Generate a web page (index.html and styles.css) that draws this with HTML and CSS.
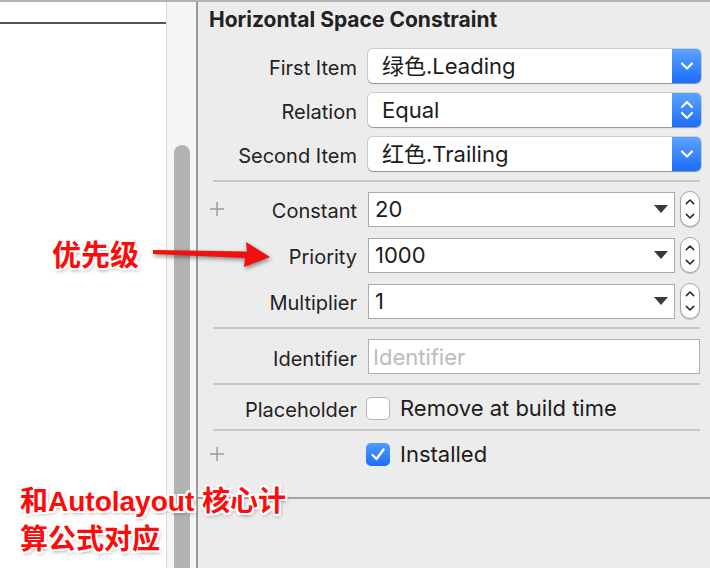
FILE: index.html
```html
<!DOCTYPE html>
<html>
<head>
<meta charset="utf-8">
<link rel="stylesheet" href="styles.css">
</head>
<body>
<div class="window">
  <div class="left-pane"><div class="rule"></div></div>
  <div class="scroll-col"><div class="thumb"></div></div>
  <div class="panel">
    <h2 class="title">Horizontal Space Constraint</h2>

    <div class="row first">
      <div class="lab"><span class="txt">First Item</span></div>
      <div class="popup">
        <span class="val">绿色.Leading</span>
        <span class="btn"><svg width="14" height="10" viewBox="0 0 14 10"><path d="M2 2.5 L7 7.5 L12 2.5" fill="none" stroke="#fff" stroke-width="2.2" stroke-linecap="round" stroke-linejoin="round"/></svg></span>
      </div>
    </div>
    <div class="row popup-row">
      <div class="lab"><span class="txt">Relation</span></div>
      <div class="popup">
        <span class="val">Equal</span>
        <span class="btn"><svg width="14" height="24" viewBox="0 0 14 24"><path d="M2 9 L7 4 L12 9 M2 15 L7 20 L12 15" fill="none" stroke="#fff" stroke-width="2.2" stroke-linecap="round" stroke-linejoin="round"/></svg></span>
      </div>
    </div>
    <div class="row popup-row">
      <div class="lab"><span class="txt">Second Item</span></div>
      <div class="popup">
        <span class="val">红色.Trailing</span>
        <span class="btn"><svg width="14" height="10" viewBox="0 0 14 10"><path d="M2 2.5 L7 7.5 L12 2.5" fill="none" stroke="#fff" stroke-width="2.2" stroke-linecap="round" stroke-linejoin="round"/></svg></span>
      </div>
    </div>

    <div class="sep"></div>

    <div class="row combo-row first-combo">
      <div class="lab"><svg class="plus" width="14" height="14" viewBox="0 0 14 14"><path d="M7 0 V14 M0 7 H14" stroke="#9c9c9c" stroke-width="1.5"/></svg><span class="txt">Constant</span></div>
      <div class="combo"><span class="val">20</span><span class="tri"></span></div>
      <div class="stepper"><svg width="20" height="36" viewBox="0 0 20 36"><path d="M6 12 L10 8 L14 12 M6 24 L10 28 L14 24" fill="none" stroke="#2a2a2a" stroke-width="1.8" stroke-linecap="round" stroke-linejoin="round"/></svg></div>
    </div>
    <div class="row combo-row">
      <div class="lab"><span class="txt">Priority</span></div>
      <div class="combo"><span class="val">1000</span><span class="tri"></span></div>
      <div class="stepper"><svg width="20" height="36" viewBox="0 0 20 36"><path d="M6 12 L10 8 L14 12 M6 24 L10 28 L14 24" fill="none" stroke="#2a2a2a" stroke-width="1.8" stroke-linecap="round" stroke-linejoin="round"/></svg></div>
    </div>
    <div class="row combo-row">
      <div class="lab"><span class="txt">Multiplier</span></div>
      <div class="combo"><span class="val">1</span><span class="tri"></span></div>
      <div class="stepper"><svg width="20" height="36" viewBox="0 0 20 36"><path d="M6 12 L10 8 L14 12 M6 24 L10 28 L14 24" fill="none" stroke="#2a2a2a" stroke-width="1.8" stroke-linecap="round" stroke-linejoin="round"/></svg></div>
    </div>

    <div class="sep sep-b"></div>

    <div class="row field-row">
      <div class="lab"><span class="txt">Identifier</span></div>
      <div class="field"><span class="ph">Identifier</span></div>
    </div>

    <div class="sep"></div>

    <div class="row check-row">
      <div class="lab"><span class="txt">Placeholder</span></div>
      <span class="box"></span>
      <span class="ctext">Remove at build time</span>
    </div>

    <div class="sep"></div>

    <div class="row check-row">
      <div class="lab"><svg class="plus" width="14" height="14" viewBox="0 0 14 14"><path d="M7 0 V14 M0 7 H14" stroke="#9c9c9c" stroke-width="1.5"/></svg></div>
      <span class="box checked"><svg width="24" height="23" viewBox="0 0 24 23"><path d="M6.5 12 L10.5 16 L17.5 6.5" fill="none" stroke="#fff" stroke-width="2.4" stroke-linecap="round" stroke-linejoin="round"/></svg></span>
      <span class="ctext">Installed</span>
    </div>

    <div class="bottom-rule"></div>
  </div>

  <div class="note note-priority">优先级</div>
  <svg class="arrow" width="130" height="40" viewBox="0 0 130 40">
    <polygon points="3,12 97,13.5 96,4 120,19 94,29 95,20 3,16" fill="#f2100e"/>
  </svg>
  <div class="note note-formula">和Autolayout 核心计<br>算公式对应</div>
</div>
</body>
</html>
```

FILE: styles.css
```css
html, body {
  margin: 0;
  padding: 0;
}
body {
  width: 710px;
  height: 568px;
  overflow: hidden;
  background: #ececec;
  font-family: "Inter", "Noto Sans CJK SC", sans-serif;
  color: #222;
}
.window {
  position: relative;
  display: flex;
  height: 566px;
  border-top: 2px solid #b3b3b3;
}
.left-pane {
  width: 166px;
  background: #fff;
  border-right: 1px solid #dadada;
}
.rule {
  margin-top: 20px;
  height: 2px;
  background: #555;
}
.scroll-col {
  width: 29px;
  background: #f5f5f5;
  border-right: 2px solid #9a9a9a;
  display: flex;
  flex-direction: column;
}
.thumb {
  margin: 143px 0 0 7px;
  width: 16px;
  flex: 1;
  background: #b2b2b2;
  border-radius: 8px 8px 0 0;
}
.panel {
  flex: 1;
  background: #ececec;
  display: flex;
  flex-direction: column;
}
.title {
  margin: 6px 0 0 11px;
  height: 24px;
  line-height: 24px;
  font-size: 21px;
  font-weight: 700;
  color: #222;
  white-space: nowrap;
}
.row {
  display: flex;
  align-items: center;
  font-size: 20px;
}
.lab {
  width: 147px;
  margin-left: 12px;
  margin-right: 11px;
  display: flex;
  align-items: center;
  color: #222;
  white-space: nowrap;
}
.lab .txt {
  margin-left: auto;
  padding-top: 4px;
}
.plus {
  display: block;
}
.first {
  margin-top: 17px;
}
.popup-row {
  margin-top: 10px;
}
.popup {
  width: 333px;
  height: 34px;
  display: flex;
  background: #fff;
  border-radius: 5px;
  box-shadow: 0 0 0 1px rgba(0,0,0,0.13), 0 1px 1px 0 rgba(0,0,0,0.28);
}
.popup .val {
  flex: 1;
  padding-left: 14px;
  line-height: 34px;
  font-size: 22px;
  color: #1c1c1c;
}
.popup .btn {
  width: 29px;
  border-radius: 0 5px 5px 0;
  background: linear-gradient(#5ca4ff, #1a6cfd);
  display: flex;
  align-items: center;
  justify-content: center;
}
.sep {
  margin: 9px 0 0 15px;
  width: 487px;
  height: 2px;
  background: #c8c8c8;
}
.sep-b {
  margin-top: 8px;
}
.combo-row {
  margin-top: 10px;
  height: 36px;
}
.first-combo {
  margin-top: 9px;
}
.combo {
  box-sizing: border-box;
  width: 307px;
  height: 35px;
  background: #fff;
  border: 1px solid #aaa;
  display: flex;
  align-items: center;
}
.combo .val {
  flex: 1;
  padding-left: 6px;
  font-size: 22px;
  color: #1c1c1c;
}
.tri {
  width: 0;
  height: 0;
  margin-right: 6px;
  border-left: 7px solid transparent;
  border-right: 7px solid transparent;
  border-top: 8px solid #3a3a3a;
}
.stepper {
  box-sizing: border-box;
  margin-left: 5px;
  width: 20px;
  height: 36px;
  border: 1px solid #a6a6a6;
  border-radius: 10px;
  background: #fff;
  box-shadow: 0 1px 1px rgba(0,0,0,0.2);
  display: flex;
  align-items: center;
  justify-content: center;
  overflow: hidden;
}
.field-row {
  margin-top: 10px;
}
.field {
  box-sizing: border-box;
  width: 332px;
  height: 35px;
  background: #fff;
  border: 1px solid #b0b0b0;
  display: flex;
  align-items: center;
}
.ph {
  padding-left: 4px;
  font-size: 22px;
  color: #bcbcbc;
}
.check-row {
  margin-top: 11px;
  height: 24px;
}
.check-row .lab {
  margin-right: 9px;
}
.box {
  box-sizing: border-box;
  width: 24px;
  height: 23px;
  border-radius: 5px;
  background: #fff;
  border: 1px solid #b8b8b8;
  display: flex;
}
.box.checked {
  border: none;
  background: linear-gradient(#4e9bff, #1e6ff5);
}
.ctext {
  margin-left: 10px;
  font-size: 22px;
  color: #1c1c1c;
}
.bottom-rule {
  margin-top: 31px;
  height: 2px;
  background: #a4a4a4;
}
.note {
  position: absolute;
  font-family: "Liberation Sans", "Noto Sans CJK SC", sans-serif;
  font-weight: 700;
  font-size: 28px;
  color: #ff0a0a;
  text-shadow: -2px 0 #fff, 2px 0 #fff, 0 -2px #fff, 0 2px #fff,
    -2px -2px #fff, 2px 2px #fff, -2px 2px #fff, 2px -2px #fff,
    1px 2px 4px rgba(0,0,0,0.55);
  white-space: nowrap;
}
.note-priority {
  left: 52px;
  top: 235px;
  line-height: 38px;
  font-size: 29px;
}
.note-formula {
  left: 20px;
  top: 481px;
  line-height: 38px;
}
.arrow {
  position: absolute;
  left: 150px;
  top: 236px;
  filter: drop-shadow(1px 2px 2px rgba(0,0,0,0.45));
}
```
